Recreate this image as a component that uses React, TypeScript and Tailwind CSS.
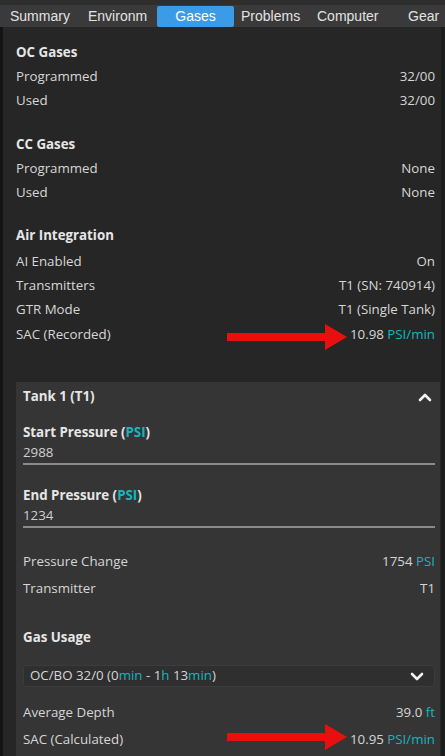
import React from "react";

const teal = "text-[#19b4bf]";

function Row({ label, children, className = "" }: { label: string; children: React.ReactNode; className?: string }) {
  return (
    <div className={`flex items-center justify-between h-6 ${className}`}>
      <span>{label}</span>
      <span>{children}</span>
    </div>
  );
}

function Arrow({ top }: { top: number }) {
  return (
    <svg className="absolute" style={{ left: 225, top }} width="124" height="26" viewBox="0 0 124 26">
      <rect x="2" y="9" width="102" height="8" fill="#e8100f" />
      <polygon points="100,0 122,13 100,26" fill="#e8100f" />
    </svg>
  );
}

export default function App() {
  const tabs = ["Summary", "Environm", "Gases", "Problems", "Computer", "Gear"];
  return (
    <div
      className="relative w-[445px] h-[756px] overflow-hidden bg-[#262626] text-[#d6d6d6] text-[13.3px]"
      style={{ fontFamily: "'Open Sans', 'Noto Sans', sans-serif" }}
    >
      {/* window frame */}
      <div className="h-[6px] bg-[#2e2e2e] border-b border-[#3a3a3a]" />
      <div
        className="flex items-center h-[21px] bg-[#3a3a3a] text-[#e2e2e2] text-[14px] pl-[10px]"
        style={{ fontFamily: "'Liberation Sans', Arial, sans-serif" }}
      >
        {tabs.map((t) => (
          <div
            key={t}
            className={
              t === "Gases"
                ? "ml-[-4px] mr-[7px] w-[77px] h-[21px] flex items-center justify-center bg-[#3c9be6] text-white rounded-[2px]"
                : t === "Summary"
                ? "w-[78px]"
                : t === "Environm"
                ? "w-[73px]"
                : t === "Problems"
                ? "w-[76px]"
                : t === "Computer"
                ? "w-[91px]"
                : ""
            }
          >
            {t}
          </div>
        ))}
      </div>

      <div className="flex h-full">
        <div className="w-[3px] bg-[#141414]" />
        <div className="flex-1 pl-[13px] pr-[6px]">
          <div className="pt-[14px]">
            <div className="font-bold text-[#e6e6e6] h-6 flex items-center">OC Gases</div>
            <Row label="Programmed">32/00</Row>
            <Row label="Used">32/00</Row>
          </div>

          <div className="pt-[20px]">
            <div className="font-bold text-[#e6e6e6] h-6 flex items-center">CC Gases</div>
            <Row label="Programmed">None</Row>
            <Row label="Used">None</Row>
          </div>

          <div className="pt-[19px]">
            <div className="font-bold text-[#e6e6e6] h-6 flex items-center">Air Integration</div>
            <Row label="AI Enabled" className="mt-[2px]">On</Row>
            <Row label="Transmitters">T1 (SN: 740914)</Row>
            <Row label="GTR Mode">T1 (Single Tank)</Row>
            <Row label="SAC (Recorded)" className="mt-[1px]">
              10.98 <span className={teal}>PSI/min</span>
            </Row>
          </div>

          {/* Tank panel */}
          <div className="mt-[35px] mr-[-5px] bg-[#353535] pl-[7px] pr-[5px] pt-[3px] h-[400px]">
            <div className="flex items-center justify-between h-6 font-bold text-[#e6e6e6]">
              <span>Tank 1 (T1)</span>
              <svg width="14" height="10" viewBox="0 0 14 10" className="mr-[3px]">
                <path d="M2 8 L7 3 L12 8" stroke="#f2f2f2" strokeWidth="2.6" fill="none" strokeLinecap="round" strokeLinejoin="round" />
              </svg>
            </div>

            <div className="mt-[13px] font-bold text-[#e6e6e6] leading-5">
              Start Pressure (<span className={teal}>PSI</span>)
            </div>
            <div className="leading-5 text-[#cfcfcf] border-b-2 border-[#8a8a8a] pb-[1px]">2988</div>

            <div className="mt-[20px] font-bold text-[#e6e6e6] leading-5">
              End Pressure (<span className={teal}>PSI</span>)
            </div>
            <div className="leading-5 text-[#cfcfcf] border-b-2 border-[#8a8a8a] pb-[1px]">1234</div>

            <div className="mt-[20px]">
              <Row label="Pressure Change" className="h-[27px]">
                1754 <span className={teal}>PSI</span>
              </Row>
              <Row label="Transmitter" className="h-[27px]">T1</Row>
            </div>

            <div className="mt-[24px] font-bold text-[#e6e6e6] h-6 flex items-center">Gas Usage</div>

            <div className="mt-[15px] h-[22px] flex items-center justify-between bg-[#2f2f2f] border border-[#3c3c3c] rounded-[3px] pl-[6px] pr-[10px]">
              <span>
                OC/BO 32/0 (0<span className={teal}>min</span> - 1<span className={teal}>h</span> 13
                <span className={teal}>min</span>)
              </span>
              <svg width="14" height="10" viewBox="0 0 14 10">
                <path d="M2 3 L7 8 L12 3" stroke="#f2f2f2" strokeWidth="2.6" fill="none" strokeLinecap="round" strokeLinejoin="round" />
              </svg>
            </div>

            <div className="mt-[12px]">
              <Row label="Average Depth" className="h-[27px]">
                39.0 <span className={teal}>ft</span>
              </Row>
              <Row label="SAC (Calculated)" className="h-[28px]">
                10.95 <span className={teal}>PSI/min</span>
              </Row>
            </div>
          </div>
        </div>
        <div className="w-[4px] bg-[#1c1c1c]" />
      </div>

      <Arrow top={324} />
      <Arrow top={724} />
    </div>
  );
}
